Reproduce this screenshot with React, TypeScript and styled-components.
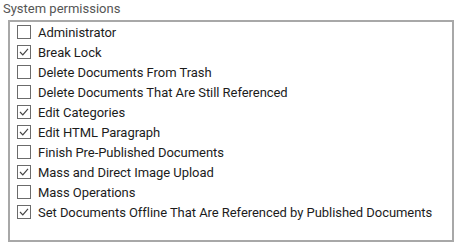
import React from 'react';
import styled, { createGlobalStyle } from 'styled-components';

const GlobalStyle = createGlobalStyle`
  body {
    margin: 0;
    background: #fff;
    font-family: Roboto, "Liberation Sans", sans-serif;
  }
`;

const Wrapper = styled.div`
  width: 460px;
  height: 245px;
  padding-top: 1px;
  box-sizing: border-box;
`;

const Title = styled.div`
  font-size: 13px;
  line-height: 16px;
  color: #555;
  padding-left: 3px;
  margin-bottom: 3px;
`;

const Box = styled.div`
  margin-left: 8px;
  width: 446px;
  height: 222px;
  box-sizing: border-box;
  border: 2px solid #a8a8a8;
  padding: 0 0 0 7px;
  display: flex;
  flex-direction: column;
`;

const Row = styled.label`
  display: flex;
  align-items: center;
  gap: 7px;
  height: 20px;
  font-size: 13px;
  letter-spacing: -0.05px;
  color: #1c1c1c;
`;

const CheckBox = styled.span`
  width: 14px;
  height: 14px;
  box-sizing: border-box;
  border: 1px solid #6b6b6b;
  display: flex;
  align-items: center;
  justify-content: center;
  flex-shrink: 0;
`;

const permissions: { label: string; checked: boolean }[] = [
  { label: 'Administrator', checked: false },
  { label: 'Break Lock', checked: true },
  { label: 'Delete Documents From Trash', checked: false },
  { label: 'Delete Documents That Are Still Referenced', checked: false },
  { label: 'Edit Categories', checked: true },
  { label: 'Edit HTML Paragraph', checked: true },
  { label: 'Finish Pre-Published Documents', checked: false },
  { label: 'Mass and Direct Image Upload', checked: true },
  { label: 'Mass Operations', checked: false },
  { label: 'Set Documents Offline That Are Referenced by Published Documents', checked: true },
];

const Check: React.FC<{ checked: boolean }> = ({ checked }) => (
  <CheckBox>
    {checked && (
      <svg width="12" height="12" viewBox="0 0 12 12">
        <path d="M2 6 L4.8 8.8 L10 2.8" fill="none" stroke="#444" strokeWidth="1.2" />
      </svg>
    )}
  </CheckBox>
);

const App: React.FC = () => (
  <Wrapper>
    <GlobalStyle />
    <Title>System permissions</Title>
    <Box>
      {permissions.map((p) => (
        <Row key={p.label}>
          <Check checked={p.checked} />
          {p.label}
        </Row>
      ))}
    </Box>
  </Wrapper>
);

export default App;
